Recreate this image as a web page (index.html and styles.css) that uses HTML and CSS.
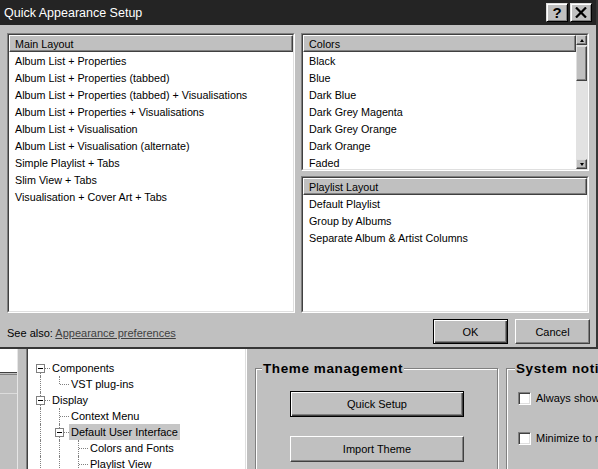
FILE: index.html
```html
<!DOCTYPE html>
<html>
<head>
<meta charset="utf-8">
<link rel="stylesheet" href="styles.css">
</head>
<body>
<div class="dialog">
  <div class="titlebar">
    <span class="title">Quick Appearance Setup</span>
    <div class="tb-btns">
      <span class="tb-btn help">?</span>
      <span class="tb-btn close"><svg width="12" height="11" viewBox="0 0 12 11"><path d="M1 0.5 L11 10.5 M11 0.5 L1 10.5" stroke="#000" stroke-width="2.2" fill="none"/></svg></span>
    </div>
  </div>
  <div class="dlg-body">
    <div class="lists">
      <div class="listbox main">
        <div class="lb-inner">
          <div class="lb-head">Main Layout</div>
          <ul class="items">
            <li>Album List + Properties</li>
            <li>Album List + Properties (tabbed)</li>
            <li>Album List + Properties (tabbed) + Visualisations</li>
            <li>Album List + Properties + Visualisations</li>
            <li>Album List + Visualisation</li>
            <li>Album List + Visualisation (alternate)</li>
            <li>Simple Playlist + Tabs</li>
            <li>Slim View + Tabs</li>
            <li>Visualisation + Cover Art + Tabs</li>
          </ul>
        </div>
      </div>
      <div class="col-right">
        <div class="listbox colors">
          <div class="lb-inner lb-row">
            <div class="lb-col">
              <div class="lb-head">Colors</div>
              <ul class="items">
                <li>Black</li>
                <li>Blue</li>
                <li>Dark Blue</li>
                <li>Dark Grey Magenta</li>
                <li>Dark Grey Orange</li>
                <li>Dark Orange</li>
                <li>Faded</li>
              </ul>
            </div>
            <div class="scrollbar">
              <div class="sb-btn"><span class="arrow-up"></span></div>
              <div class="sb-thumb"></div>
              <div class="sb-space"></div>
              <div class="sb-btn"><span class="arrow-down"></span></div>
            </div>
          </div>
        </div>
        <div class="listbox playlist">
          <div class="lb-inner">
            <div class="lb-head">Playlist Layout</div>
            <ul class="items">
              <li>Default Playlist</li>
              <li>Group by Albums</li>
              <li>Separate Album &amp; Artist Columns</li>
            </ul>
          </div>
        </div>
      </div>
    </div>
    <div class="footer">
      <span class="see">See also: <span class="link">Appearance preferences</span></span>
      <div class="btns">
        <button class="btn default">OK</button>
        <button class="btn">Cancel</button>
      </div>
    </div>
  </div>
</div>

<div class="lower">
  <div class="strip">
    <div class="strip-top"></div>
    <div class="strip-tab"></div>
  </div>
  <div class="tree">
    <div class="tree-row"><span class="c bx down"><span class="exp"></span></span><span class="label">Components</span></div>
    <div class="tree-row"><span class="c v"></span><span class="c l"></span><span class="label">VST plug-ins</span></div>
    <div class="tree-row"><span class="c bx both"><span class="exp"></span></span><span class="label">Display</span></div>
    <div class="tree-row"><span class="c v"></span><span class="c t"></span><span class="label">Context Menu</span></div>
    <div class="tree-row"><span class="c v"></span><span class="c bx both"><span class="exp"></span></span><span class="label sel">Default User Interface</span></div>
    <div class="tree-row"><span class="c v"></span><span class="c v"></span><span class="c t"></span><span class="label">Colors and Fonts</span></div>
    <div class="tree-row"><span class="c v"></span><span class="c v"></span><span class="c t"></span><span class="label">Playlist View</span></div>
  </div>
  <fieldset class="group theme">
    <legend>Theme management</legend>
    <button class="btn default wide">Quick Setup</button>
    <button class="btn wide second">Import Theme</button>
  </fieldset>
  <fieldset class="group notify">
    <legend>System notifications</legend>
    <div class="check-row"><span class="checkbox"></span><span>Always show notification area icon</span></div>
    <div class="check-row second"><span class="checkbox"></span><span>Minimize to notification area</span></div>
  </fieldset>
</div>
</body>
</html>
```

FILE: styles.css
```css
* { box-sizing: border-box; }
html, body { margin: 0; }
body {
  width: 598px;
  height: 469px;
  overflow: hidden;
  background: #c0c0c0;
  font-family: "Liberation Sans", Arial, sans-serif;
  font-size: 11px;
  color: #000;
}
ul { list-style: none; margin: 0; padding: 0; }

/* dialog */
.dialog {
  width: 598px;
  height: 349px;
  border-right: 2px solid #363636;
  border-bottom: 2px solid #363636;
  display: flex;
  flex-direction: column;
}
.titlebar {
  height: 25px;
  flex: none;
  background: #242424;
  color: #fff;
  display: flex;
  align-items: center;
  padding: 0 4px;
}
.title { font-size: 12.5px; padding-top: 1px; }
.tb-btns { margin-left: auto; display: flex; gap: 2px; }
.tb-btn {
  width: 22px;
  height: 19px;
  background: #c0c0c0;
  border: 1px solid;
  border-color: #dfdfdf #000 #000 #dfdfdf;
  box-shadow: inset 1px 1px 0 #fff, inset -1px -1px 0 #808080;
  display: flex;
  align-items: center;
  justify-content: center;
  color: #000;
  font-weight: bold;
  font-size: 15px;
  line-height: 1;
}

.dlg-body { padding: 8px 7px 0 7px; }
.lists {
  display: grid;
  grid-template-columns: 288px 288px;
  column-gap: 6px;
  height: 280px;
}
.col-right { display: flex; flex-direction: column; gap: 5px; }
.listbox {
  border: 1px solid;
  border-color: #808080 #fff #fff #808080;
  background: #fff;
  overflow: hidden;
  font-size: 10.75px;
}
.colors { height: 138px; flex: none; }
.playlist { height: 137px; flex: none; }
.lb-inner {
  height: 100%;
  border: 1px solid;
  border-color: #404040 #dfdfdf #dfdfdf #404040;
  overflow: hidden;
}
.lb-row { display: flex; }
.lb-col { flex: 1; min-width: 0; }
.lb-head {
  height: 17px;
  line-height: 16px;
  background: #c0c0c0;
  border: 1px solid;
  border-color: #fff #404040 #404040 #fff;
  box-shadow: inset -1px -1px 0 #808080;
  padding-left: 5px;
  white-space: nowrap;
}
.items li {
  height: 17px;
  line-height: 18px;
  padding-left: 6px;
  white-space: nowrap;
}

.scrollbar {
  width: 11px;
  flex: none;
  background: #e2e2e2;
  display: flex;
  flex-direction: column;
}
.sb-btn, .sb-thumb {
  background: #c0c0c0;
  border: 1px solid;
  border-color: #dfdfdf #404040 #404040 #dfdfdf;
  box-shadow: inset -1px -1px 0 #808080;
}
.sb-btn {
  height: 10px;
  flex: none;
  display: flex;
  align-items: center;
  justify-content: center;
}
.sb-thumb { height: 35px; flex: none; margin-top: 1px; }
.sb-space { flex: 1; }
.arrow-up, .arrow-down {
  width: 1px;
  height: 0;
  border-left: 2px solid transparent;
  border-right: 2px solid transparent;
}
.arrow-up { border-bottom: 3px solid #000; }
.arrow-down { border-top: 3px solid #000; }

.footer {
  display: flex;
  align-items: center;
  margin-top: 6px;
  height: 25px;
}
.see { padding-top: 2px; }
.link { color: #404040; text-decoration: underline; }
.btns { margin-left: auto; display: flex; gap: 7px; margin-right: -1px; }
.btn {
  width: 75px;
  height: 25px;
  padding: 0;
  font: inherit;
  color: #000;
  background: #c0c0c0;
  border: 1px solid;
  border-color: #fff #404040 #404040 #fff;
  box-shadow: inset -1px -1px 0 #808080;
}
.btn.default {
  border-color: #000;
  box-shadow: inset 1px 1px 0 #fff, inset -1px -1px 0 #404040, inset -2px -2px 0 #808080;
}

/* background window */
.lower {
  display: flex;
  align-items: flex-start;
  height: 120px;
  overflow: hidden;
  white-space: nowrap;
}
.strip {
  width: 18px;
  height: 120px;
  flex: none;
  border-right: 1px solid #e6e6e6;
}
.strip-top {
  height: 24px;
  background: #fff;
  border-bottom: 1px solid #404040;
}
.strip-tab {
  height: 20px;
  margin-top: 1px;
  border-top: 1px solid #808080;
  border-bottom: 1px solid #dcdcdc;
}
.tree {
  width: 221px;
  height: 120px;
  flex: none;
  margin-left: 8px;
  background: #fff;
  border-left: 1px solid #808080;
  border-right: 1px solid #fff;
  box-shadow: inset 1px 0 0 #404040, inset -1px 0 0 #dfdfdf;
  padding: 11px 0 0 4px;
}
.tree-row { display: flex; height: 16px; align-items: center; }
.c { width: 19px; height: 16px; flex: none; position: relative; }
.c::before, .c::after { position: absolute; }
.c.v::before, .c.t::before {
  content: "";
  left: 9px; top: 0; bottom: 0;
  border-left: 1px dotted #808080;
}
.c.l::before {
  content: "";
  left: 9px; top: 0; height: 8px;
  border-left: 1px dotted #808080;
}
.c.t::after, .c.l::after {
  content: "";
  left: 10px; right: 0; top: 8px;
  border-top: 1px dotted #808080;
}
.c.bx { display: flex; align-items: center; justify-content: center; }
.c.bx::after {
  content: "";
  left: 14px; right: 0; top: 8px;
  border-top: 1px dotted #808080;
}
.c.bx.down::before {
  content: "";
  left: 9px; top: 8px; bottom: 0;
  border-left: 1px dotted #808080;
}
.c.bx.both::before {
  content: "";
  left: 9px; top: 0; bottom: 0;
  border-left: 1px dotted #808080;
}
.exp {
  width: 9px;
  height: 9px;
  border: 1px solid #808080;
  background: #fff;
  position: relative;
  z-index: 1;
  display: flex;
  align-items: center;
  justify-content: center;
}
.exp::before { content: ""; width: 5px; height: 1px; background: #000; }
.label { line-height: 16px; padding: 0 2px; }
.label.sel { background: #c6c6c6; }

fieldset.group {
  flex: none;
  margin: 11px 0 0 8px;
  border: 1px solid #808080;
  box-shadow: 1px 1px 0 #fff, inset 1px 1px 0 #fff;
  min-inline-size: 0;
  height: 140px;
}
fieldset.group legend {
  padding: 0 1px;
  font-weight: bold;
  font-size: 13.5px;
  letter-spacing: 0.6px;
  line-height: 17px;
  background: #c0c0c0;
}
.theme { width: 243px; padding: 14px 0 0 6px; }
.btn.wide { display: block; width: 174px; height: 26px; margin-left: 28px; }
.btn.wide.second { margin-top: 19px; }
.notify { width: 220px; padding: 13px 0 0 8px; }
.notify legend { padding: 0; }
.check-row {
  display: flex;
  align-items: center;
  gap: 5px;
  height: 16px;
  margin-left: 3px;
}
.check-row.second { margin-top: 24px; }
.checkbox {
  width: 13px;
  height: 13px;
  flex: none;
  background: #fff;
  border: 1px solid;
  border-color: #808080 #fff #fff #808080;
  box-shadow: inset 1px 1px 0 #404040, inset -1px -1px 0 #dfdfdf;
}
```
